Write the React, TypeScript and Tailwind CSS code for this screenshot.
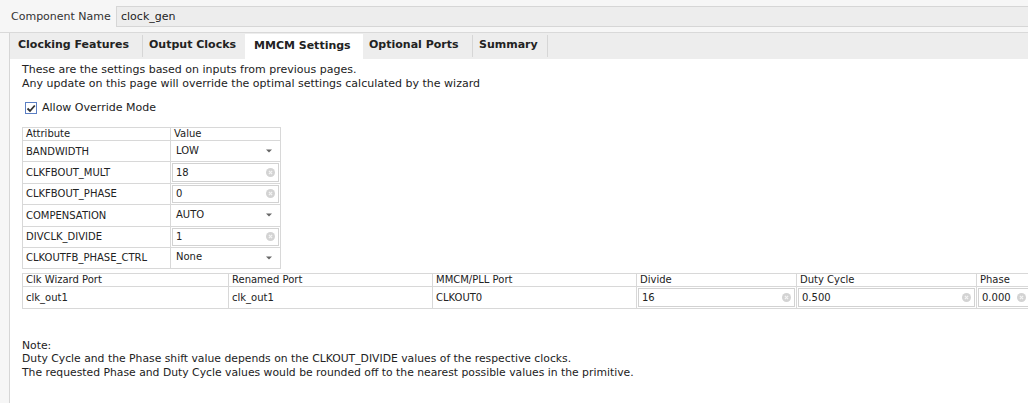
import React from "react";

const font = { fontFamily: '"DejaVu Sans", "Liberation Sans", sans-serif' };

function ClearIcon() {
  return (
    <svg width="9" height="9" viewBox="0 0 9 9" className="shrink-0">
      <circle cx="4.5" cy="4.5" r="4.5" fill="#d3d3d3" />
      <path d="M2.9 2.9 L6.1 6.1 M6.1 2.9 L2.9 6.1" stroke="#f4f4f4" strokeWidth="1.2" />
    </svg>
  );
}

function Arrow() {
  return (
    <svg width="6" height="4" viewBox="0 0 6 4" className="shrink-0">
      <path d="M0 0.5 L6 0.5 L3 3.5 Z" fill="#666666" />
    </svg>
  );
}

function InputCell({ value, last }: { value: string; last?: boolean }) {
  return (
    <div className={"flex items-stretch p-[1px] " + (last ? "" : "border-r border-[#d8d8d8]")}>
      <div className="flex flex-1 items-center justify-between border border-[#d2d2d2] bg-white pl-[3px] pr-[3px]">
        <span>{value}</span>
        <ClearIcon />
      </div>
    </div>
  );
}

function SelectCell({ value }: { value: string }) {
  return (
    <div className="flex items-center justify-between pl-[5px] pr-[8px]">
      <span className="pb-[2px]">{value}</span>
      <Arrow />
    </div>
  );
}

const attrRows: { name: string; kind: "sel" | "inp"; value: string }[] = [
  { name: "BANDWIDTH", kind: "sel", value: "LOW" },
  { name: "CLKFBOUT_MULT", kind: "inp", value: "18" },
  { name: "CLKFBOUT_PHASE", kind: "inp", value: "0" },
  { name: "COMPENSATION", kind: "sel", value: "AUTO" },
  { name: "DIVCLK_DIVIDE", kind: "inp", value: "1" },
  { name: "CLKOUTFB_PHASE_CTRL", kind: "sel", value: "None" },
];

export default function App() {
  return (
    <div
      className="w-[1028px] h-[403px] overflow-hidden bg-[#f6f6f6] text-[#222222] flex flex-col"
      style={font}
    >
      {/* Component name row */}
      <div className="flex items-start pt-[6px] h-[33px] border-b border-[#d9d9d9]">
        <div className="w-[116px] pl-[11px] text-[11px] leading-[21px] text-[#333333]">Component Name</div>
        <div className="flex-1 h-[21px] bg-[#ededed] border-y border-[#d6d6d6] border-l border-l-[#d6d6d6] pl-[4px] text-[11px] leading-[19px] text-[#222222]">
          clock_gen
        </div>
      </div>

      {/* Tab panel */}
      <div className="flex-1 ml-[9px] flex flex-col border-l border-[#d6d6d6]">
        <div className="flex h-[26px] bg-[#ededed] text-[11px] font-bold text-[#222222]">
          <div className="w-[132px] pl-[8px] flex items-center">
            <span className="pb-[1px]">Clocking Features</span>
          </div>
          <div className="w-[103px] pl-[6px] flex items-center border-l border-[#d6d6d6] my-[2px]">
            <span className="pb-[1px]">Output Clocks</span>
          </div>
          <div className="w-[118px] pl-[9px] flex items-center bg-white mt-[1px]">
            <span>MMCM Settings</span>
          </div>
          <div className="w-[109px] pl-[6px] flex items-center">
            <span className="pb-[1px]">Optional Ports</span>
          </div>
          <div className="w-[75px] pl-[6px] flex items-center border-l border-[#d6d6d6] my-[2px]">
            <span className="pb-[1px]">Summary</span>
          </div>
          <div className="border-l border-[#d6d6d6] my-[2px]" />
        </div>

        <div className="flex-1 bg-white pl-[12px] pt-[4px] text-[11px] text-[#222222]">
          <div className="leading-[14px]">
            <div>These are the settings based on inputs from previous pages.</div>
            <div>Any update on this page will override the optimal settings calculated by the wizard</div>
          </div>

          <div className="flex items-center mt-[10px] pl-[3px] h-[14px]">
            <div className="w-[12px] h-[12px] border border-[#5b7fc4] bg-white flex items-center justify-center">
              <svg width="10" height="9" viewBox="0 0 10 9">
                <path d="M1.5 4.5 L4 7 L8.8 1.5" stroke="#333333" strokeWidth="1.8" fill="none" />
              </svg>
            </div>
            <span className="ml-[5px]">Allow Override Mode</span>
          </div>

          {/* Attribute table */}
          <div className="mt-[12px] w-[259px] border border-[#d8d8d8] text-[10px]">
            <div className="grid grid-cols-[148px_109px] h-[13px] leading-[12px] border-b border-[#d8d8d8]">
              <div className="pl-[3px] border-r border-[#d8d8d8]">Attribute</div>
              <div className="pl-[3px]">Value</div>
            </div>
            {attrRows.map((r, i) => (
              <div
                key={r.name}
                className={
                  "grid grid-cols-[148px_109px] " +
                  (i < attrRows.length - 1 ? "h-[21.4px] border-b border-[#d8d8d8]" : "h-[20px]")
                }
              >
                <div className="pl-[3px] border-r border-[#d8d8d8] flex items-center">{r.name}</div>
                {r.kind === "sel" ? <SelectCell value={r.value} /> : <InputCell value={r.value} last />}
              </div>
            ))}
          </div>

          {/* Output clocks table */}
          <div className="mt-[4px] w-[1010px] border border-[#d8d8d8] text-[10px]">
            <div className="grid grid-cols-[206px_204px_204px_160px_180px_1fr] h-[13px] leading-[12px] border-b border-[#d8d8d8]">
              <div className="pl-[3px] border-r border-[#d8d8d8]">Clk Wizard Port</div>
              <div className="pl-[3px] border-r border-[#d8d8d8]">Renamed Port</div>
              <div className="pl-[3px] border-r border-[#d8d8d8]">MMCM/PLL Port</div>
              <div className="pl-[3px] border-r border-[#d8d8d8]">Divide</div>
              <div className="pl-[3px] border-r border-[#d8d8d8]">Duty Cycle</div>
              <div className="pl-[3px]">Phase</div>
            </div>
            <div className="grid grid-cols-[206px_204px_204px_160px_180px_1fr] h-[21px]">
              <div className="pl-[3px] border-r border-[#d8d8d8] flex items-center">clk_out1</div>
              <div className="pl-[3px] border-r border-[#d8d8d8] flex items-center">clk_out1</div>
              <div className="pl-[3px] border-r border-[#d8d8d8] flex items-center">CLKOUT0</div>
              <InputCell value="16" />
              <InputCell value="0.500" />
              <InputCell value="0.000" last />
            </div>
          </div>

          <div className="mt-[30px] text-[10.8px] leading-[13.5px]">
            <div>Note:</div>
            <div>Duty Cycle and the Phase shift value depends on the CLKOUT_DIVIDE values of the respective clocks.</div>
            <div>The requested Phase and Duty Cycle values would be rounded off to the nearest possible values in the primitive.</div>
          </div>
        </div>
      </div>
    </div>
  );
}
